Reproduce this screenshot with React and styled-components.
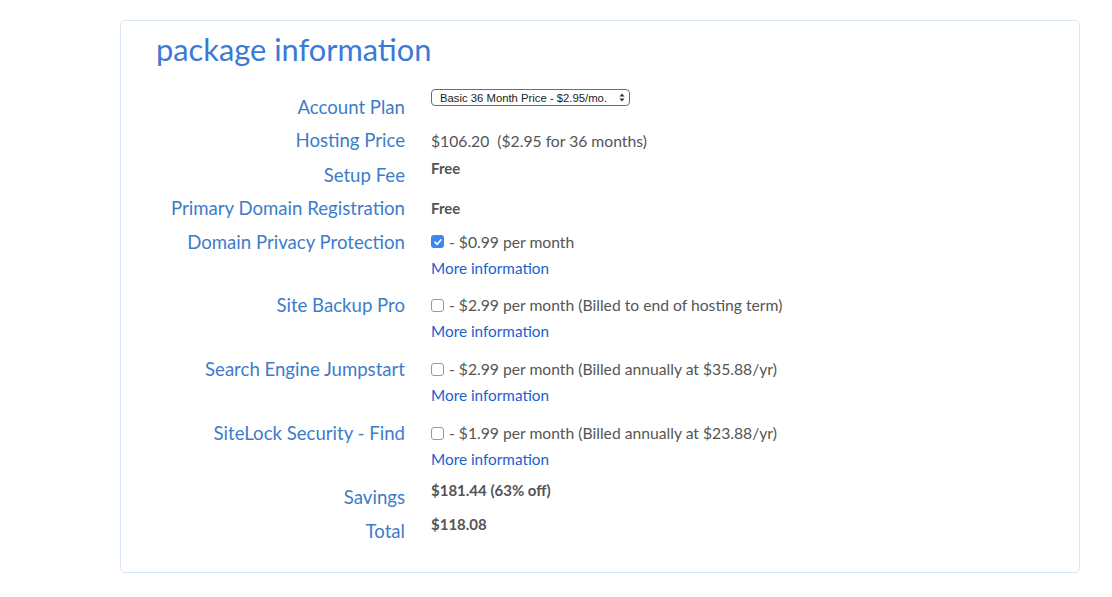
import React from "react";
import styled, { createGlobalStyle } from "styled-components";

const Global = createGlobalStyle`
  html, body { margin: 0; padding: 0; background: #fff; }
  body { font-family: Lato, "Open Sans", sans-serif; }
`;

const Page = styled.div`
  padding: 20px 0 0 120px;
`;

const Card = styled.section`
  width: 958px;
  height: 551px;
  border: 1px solid #d9e7f6;
  border-radius: 5px;
  box-sizing: content-box;
`;

const Title = styled.h2`
  margin: 0;
  padding: 9px 0 0 35px;
  font-size: 30.8px;
  line-height: 40px;
  font-weight: 400;
  color: #3a7ad6;
`;

const Rows = styled.div`
  display: flex;
  flex-direction: column;
  gap: 7.4px;
  margin-top: 24px;
`;

const Row = styled.div`
  display: grid;
  grid-template-columns: 284px 1fr;
  column-gap: 26px;
  align-items: start;
`;

const Label = styled.div`
  text-align: right;
  font-size: 18.6px;
  line-height: 26px;
  color: #3d7cc9;
  font-weight: 400;
`;

const Value = styled.div`
  font-size: 15.7px;
  line-height: 26px;
  color: #555;
  margin-top: ${(p) => p.$shift || 0}px;
  margin-bottom: ${(p) => (p.$extra ? 4.5 : 0)}px;
  font-weight: ${(p) => (p.$bold ? 700 : 400)};
`;

const BoldValue = styled(Value)`
  font-size: 15px;
`;

const Line = styled.div`
  display: flex;
  align-items: center;
  white-space: nowrap;
`;

const MoreLink = styled.a`
  display: block;
  color: #1b60d0;
  text-decoration: none;
  font-size: 15.3px;
  line-height: 26px;
`;

const SelectWrap = styled.span`
  position: relative;
  display: inline-block;
  margin-top: -5px;
  vertical-align: top;
`;

const Select = styled.select`
  appearance: none;
  -webkit-appearance: none;
  width: 199px;
  height: 17px;
  border: 1px solid #4a74a8;
  border-radius: 4px;
  background: #fff;
  font-family: "Liberation Sans", Arial, sans-serif;
  font-size: 11.3px;
  color: #222;
  padding: 0 0 0 8px;
  margin: 0;
  display: block;
  outline: none;
`;

const Arrows = styled.svg`
  position: absolute;
  right: 5px;
  top: 4px;
  pointer-events: none;
`;

const Box = styled.span`
  display: inline-flex;
  align-items: center;
  justify-content: center;
  width: 13px;
  height: 13px;
  border-radius: 3px;
  box-sizing: border-box;
  margin-right: 5px;
  border: ${(p) => (p.$checked ? "none" : "1px solid #9a9a9a")};
  background: ${(p) => (p.$checked ? "#3b87f2" : "#fff")};
`;

const Check = ({ checked }) => (
  <Box $checked={checked}>
    {checked && (
      <svg width="10" height="10" viewBox="0 0 10 10">
        <path d="M2 5.2 L4.2 7.3 L8 2.8" fill="none" stroke="#fff" strokeWidth="1.7" strokeLinecap="round" strokeLinejoin="round" />
      </svg>
    )}
  </Box>
);

const addons = [
  { label: "Domain Privacy Protection", text: "- $0.99 per month", checked: true },
  { label: "Site Backup Pro", text: "- $2.99 per month (Billed to end of hosting term)" },
  { label: "Search Engine Jumpstart", text: "- $2.99 per month (Billed annually at $35.88/yr)" },
  { label: "SiteLock Security - Find", text: "- $1.99 per month (Billed annually at $23.88/yr)" },
];

export default function App() {
  return (
    <>
      <Global />
      <Page>
        <Card>
          <Title>package information</Title>
          <Rows>
            <Row>
              <Label>Account Plan</Label>
              <Value>
                <SelectWrap>
                  <Select defaultValue="36">
                    <option value="36">Basic 36 Month Price - $2.95/mo.</option>
                  </Select>
                  <Arrows width="6" height="9" viewBox="0 0 6 9">
                    <path d="M0.5 3.5 L3 0.5 L5.5 3.5 Z M0.5 5.5 L3 8.5 L5.5 5.5 Z" fill="#333" />
                  </Arrows>
                </SelectWrap>
              </Value>
            </Row>
            <Row>
              <Label>Hosting Price</Label>
              <Value $shift={1}>$106.20&nbsp; ($2.95 for 36 months)</Value>
            </Row>
            <Row>
              <Label>Setup Fee</Label>
              <BoldValue $shift={-7} $bold>Free</BoldValue>
            </Row>
            <Row>
              <Label>Primary Domain Registration</Label>
              <BoldValue $bold>Free</BoldValue>
            </Row>
            {addons.map((a) => (
              <Row key={a.label}>
                <Label>{a.label}</Label>
                <Value $extra>
                  <Line>
                    <Check checked={a.checked} />
                    {a.text}
                  </Line>
                  <MoreLink href="#">More information</MoreLink>
                </Value>
              </Row>
            ))}
            <Row>
              <Label>Savings</Label>
              <BoldValue $shift={-7} $bold>$181.44 (63% off)</BoldValue>
            </Row>
            <Row>
              <Label>Total</Label>
              <BoldValue $shift={-7} $bold>$118.08</BoldValue>
            </Row>
          </Rows>
        </Card>
      </Page>
    </>
  );
}
